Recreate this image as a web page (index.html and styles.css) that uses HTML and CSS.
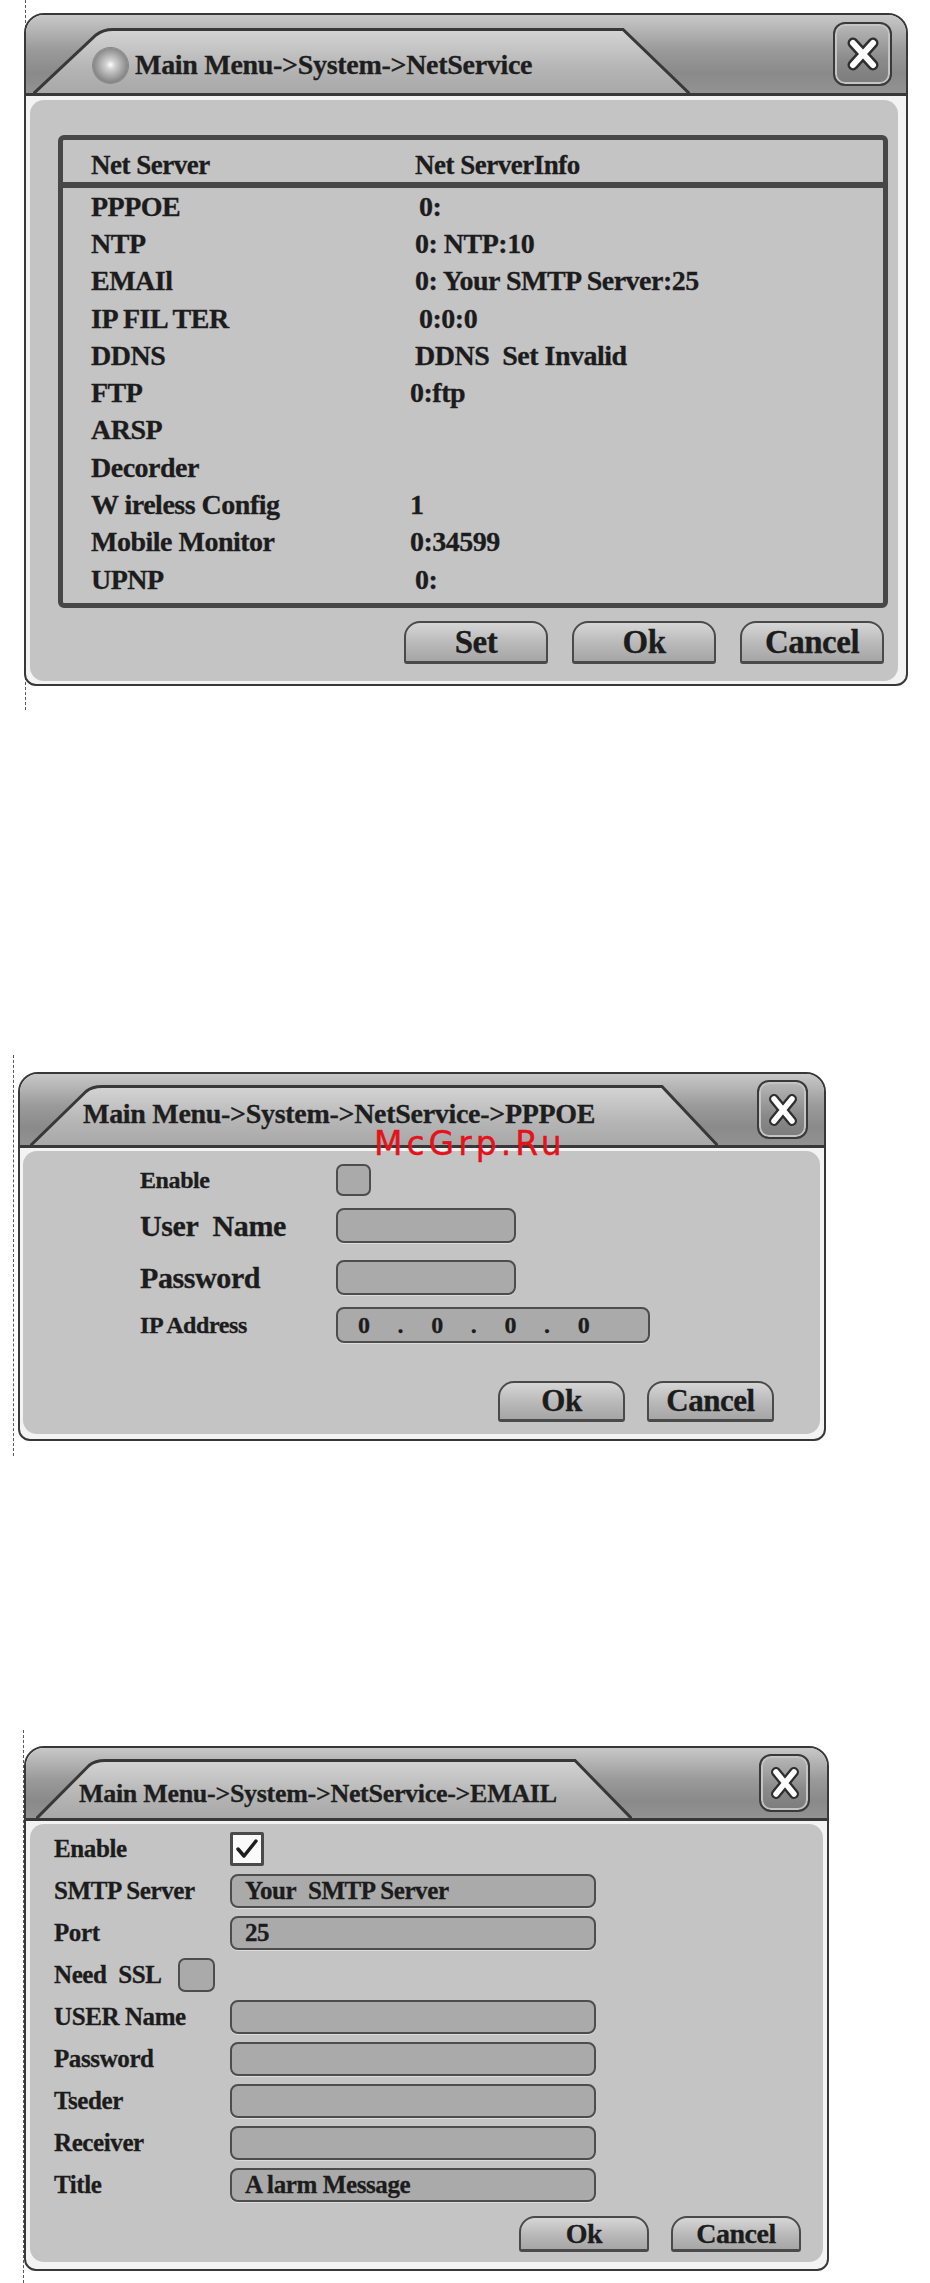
FILE: index.html
```html
<!DOCTYPE html>
<html lang="en">
<head>
    <meta charset="UTF-8">
    <title>NetService</title>
    <link rel="stylesheet" href="styles.css">
</head>
<body>
    <!-- NetService list -->
    <div class="figure fig-net">
        <div class="dialog dialog-net">
            <div class="titlebar">
                <div class="tab">
                    <svg class="tab-shape" width="657" height="65" viewBox="0 0 657 65">
                        <defs>
                            <linearGradient id="tabFill1" x1="0" y1="0" x2="0" y2="1">
                                <stop offset="0" stop-color="#d4d4d4"/>
                                <stop offset="0.6" stop-color="#b4b4b4"/>
                                <stop offset="1" stop-color="#a7a7a7"/>
                            </linearGradient>
                        </defs>
                        <path d="M-2,68 L63,7 Q70,1.5 80,1.5 L590,1.5 L659,68 Z" fill="url(#tabFill1)" stroke="#383838" stroke-width="3"/>
                    </svg>
                    <span class="sphere"></span>
                    <span class="tab-title">Main Menu-&gt;System-&gt;NetService</span>
                </div>
                <div class="close">
                    <svg width="34" height="36" viewBox="0 0 34 36">
                        <path d="M7,7 L27,29 M27,7 L7,29" stroke="#2e2e2e" stroke-width="11" stroke-linecap="round"/>
                        <path d="M7,7 L27,29 M27,7 L7,29" stroke="#fff" stroke-width="6" stroke-linecap="round"/>
                    </svg>
                </div>
            </div>
            <div class="panel">
                <div class="server-table">
                    <div class="server-head"><span>Net Server</span><span>Net ServerInfo</span></div>
                    <div class="server-row"><span>PPPOE</span><span class="nudge">0:</span></div>
                    <div class="server-row"><span>NTP</span><span>0: NTP:10</span></div>
                    <div class="server-row"><span>EMAIl</span><span>0: Your SMTP Server:25</span></div>
                    <div class="server-row"><span>IP FIL TER</span><span class="nudge">0:0:0</span></div>
                    <div class="server-row"><span>DDNS</span><span>DDNS&nbsp; Set Invalid</span></div>
                    <div class="server-row"><span>FTP</span><span class="pull">0:ftp</span></div>
                    <div class="server-row"><span>ARSP</span><span></span></div>
                    <div class="server-row"><span>Decorder</span><span></span></div>
                    <div class="server-row"><span>W ireless Config</span><span class="pull">1</span></div>
                    <div class="server-row"><span>Mobile Monitor</span><span class="pull">0:34599</span></div>
                    <div class="server-row"><span>UPNP</span><span>0:</span></div>
                </div>
                <div class="actions actions-net">
                    <div class="btn">Set</div>
                    <div class="btn">Ok</div>
                    <div class="btn">Cancel</div>
                </div>
            </div>
        </div>
    </div>

    <!-- PPPOE -->
    <div class="figure fig-pppoe">
        <div class="dialog dialog-pppoe">
            <div class="titlebar">
                <div class="tab">
                    <svg class="tab-shape" width="688" height="60" viewBox="0 0 688 60">
                        <defs>
                            <linearGradient id="tabFill2" x1="0" y1="0" x2="0" y2="1">
                                <stop offset="0" stop-color="#d4d4d4"/>
                                <stop offset="0.6" stop-color="#b4b4b4"/>
                                <stop offset="1" stop-color="#a7a7a7"/>
                            </linearGradient>
                        </defs>
                        <path d="M-2,63 L56,6.5 Q62,1.5 72,1.5 L632,1.5 L690,63 Z" fill="url(#tabFill2)" stroke="#383838" stroke-width="3"/>
                    </svg>
                    <span class="tab-title">Main Menu-&gt;System-&gt;NetService-&gt;PPPOE</span>
                </div>
                <div class="close">
                    <svg width="30" height="34" viewBox="0 0 30 34">
                        <path d="M6,6 L24,28 M24,6 L6,28" stroke="#2e2e2e" stroke-width="10" stroke-linecap="round"/>
                        <path d="M6,6 L24,28 M24,6 L6,28" stroke="#fff" stroke-width="5.5" stroke-linecap="round"/>
                    </svg>
                </div>
            </div>
            <div class="panel">
                <div class="form-row">
                    <span class="label label-sm">Enable</span>
                    <span class="check"></span>
                </div>
                <div class="form-row row-user">
                    <span class="label label-lg">User&nbsp; Name</span>
                    <span class="field field-short"></span>
                </div>
                <div class="form-row row-pass">
                    <span class="label label-lg">Password</span>
                    <span class="field field-short"></span>
                </div>
                <div class="form-row row-ip">
                    <span class="label label-sm">IP Address</span>
                    <span class="field field-ip">
                        <span>0</span><span>.</span><span>0</span><span>.</span><span>0</span><span>.</span><span>0</span>
                    </span>
                </div>
                <div class="actions actions-pppoe">
                    <div class="btn">Ok</div>
                    <div class="btn">Cancel</div>
                </div>
            </div>
            <div class="watermark">McGrp.Ru</div>
        </div>
    </div>

    <!-- EMAIL -->
    <div class="figure fig-email">
        <div class="dialog dialog-email">
            <div class="titlebar">
                <div class="tab">
                    <svg class="tab-shape" width="596" height="59" viewBox="0 0 596 59">
                        <defs>
                            <linearGradient id="tabFill3" x1="0" y1="0" x2="0" y2="1">
                                <stop offset="0" stop-color="#d4d4d4"/>
                                <stop offset="0.6" stop-color="#b4b4b4"/>
                                <stop offset="1" stop-color="#a7a7a7"/>
                            </linearGradient>
                        </defs>
                        <path d="M-2,62 L53,6.5 Q59,1.5 69,1.5 L539,1.5 L598,62 Z" fill="url(#tabFill3)" stroke="#383838" stroke-width="3"/>
                    </svg>
                    <span class="tab-title">Main Menu-&gt;System-&gt;NetService-&gt;EMAIL</span>
                </div>
                <div class="close">
                    <svg width="30" height="34" viewBox="0 0 30 34">
                        <path d="M6,6 L24,28 M24,6 L6,28" stroke="#2e2e2e" stroke-width="10" stroke-linecap="round"/>
                        <path d="M6,6 L24,28 M24,6 L6,28" stroke="#fff" stroke-width="5.5" stroke-linecap="round"/>
                    </svg>
                </div>
            </div>
            <div class="panel">
                <div class="form-row">
                    <span class="label">Enable</span>
                    <span class="check check-on">
                        <svg width="24" height="22" viewBox="0 0 24 22">
                            <path d="M3,11 L9,18 L21,3" fill="none" stroke="#1e1e1e" stroke-width="3.5" stroke-linecap="round" stroke-linejoin="round"/>
                        </svg>
                    </span>
                </div>
                <div class="form-row">
                    <span class="label">SMTP Server</span>
                    <span class="field">Your&nbsp; SMTP Server</span>
                </div>
                <div class="form-row">
                    <span class="label">Port</span>
                    <span class="field">25</span>
                </div>
                <div class="form-row">
                    <span class="label-inline">Need&nbsp; SSL</span>
                    <span class="check check-ssl"></span>
                </div>
                <div class="form-row">
                    <span class="label">USER Name</span>
                    <span class="field"></span>
                </div>
                <div class="form-row">
                    <span class="label">Password</span>
                    <span class="field"></span>
                </div>
                <div class="form-row">
                    <span class="label">Tseder</span>
                    <span class="field"></span>
                </div>
                <div class="form-row">
                    <span class="label">Receiver</span>
                    <span class="field"></span>
                </div>
                <div class="form-row">
                    <span class="label">Title</span>
                    <span class="field">A larm Message</span>
                </div>
                <div class="actions actions-email">
                    <div class="btn">Ok</div>
                    <div class="btn">Cancel</div>
                </div>
            </div>
        </div>
    </div>
</body>
</html>
```

FILE: styles.css
```css
body {
    margin: 0;
    background: #fff;
    color: #1c1c1c;
    font-family: "Liberation Serif", "Times New Roman", serif;
    font-weight: bold;
    -webkit-text-stroke: 0.3px #1c1c1c;
}

/* dashed guide line on the left of each screenshot */
.figure {
    border-left: 1px dashed #5a5a5a;
    box-sizing: border-box;
}

.fig-net {
    margin-left: 25px;
    height: 710px;
    padding-top: 13px;
}

.fig-net .dialog {
    margin-left: -2px;
}

.fig-pppoe {
    margin: 345px 0 0 13px;
    height: 401px;
    padding-top: 17px;
}

.fig-pppoe .dialog {
    margin-left: 4px;
}

.fig-email {
    margin: 274px 0 0 23px;
    height: 553px;
    padding-top: 16px;
}

/* dialog frame */
.dialog {
    position: relative;
    box-sizing: border-box;
    border: 2px solid #383838;
    border-radius: 20px 20px 12px 12px;
    background: #f3f3f3;
    overflow: hidden;
}

.dialog-net {
    width: 884px;
}

.dialog-pppoe {
    width: 808px;
}

.dialog-email {
    width: 805px;
}

.titlebar {
    display: flex;
    align-items: flex-end;
    padding-left: 8px;
    border-bottom: 3px solid #383838;
    background: linear-gradient(#c8c8c8, #9a9a9a 45%, #8a8a8a 75%, #929292);
}

.dialog-net .titlebar {
    height: 78px;
    padding-left: 7px;
}

.dialog-pppoe .titlebar {
    height: 71px;
    padding-left: 10px;
}

.dialog-email .titlebar {
    height: 70px;
    padding-left: 10px;
}

.tab {
    position: relative;
    display: flex;
    align-items: center;
    box-sizing: border-box;
}

.tab-shape {
    position: absolute;
    left: 0;
    top: 0;
}

.tab-title {
    position: relative;
    font-size: 28px;
    line-height: 0.8;
    letter-spacing: -0.3px;
    color: #1e1e1e;
    white-space: nowrap;
}

.dialog-net .tab {
    width: 657px;
    height: 65px;
    padding: 9px 0 0 60px;
}

.dialog-pppoe .tab {
    width: 688px;
    height: 60px;
    padding: 0 0 2px 53px;
}

.dialog-email .tab {
    width: 596px;
    height: 59px;
    padding: 11px 0 0 43px;
}

.dialog-email .tab-title {
    font-size: 26px;
}

.sphere {
    position: relative;
    width: 35px;
    height: 35px;
    margin-right: 7px;
    border-radius: 50%;
    background: radial-gradient(circle at 50% 48%, #fff 0, #d2d2d2 18%, #9a9a9a 55%, #6c6c6c 85%, #5a5a5a 100%);
    box-shadow: 0 0 0 1px #888;
}

.close {
    display: flex;
    align-items: center;
    justify-content: center;
    align-self: center;
    margin-left: auto;
    box-sizing: border-box;
    border: 2px solid #3a3a3a;
    border-radius: 12px;
    background: linear-gradient(#b8b8b8, #8a8a8a 60%, #7c7c7c);
    box-shadow: inset 0 0 0 2px #c4c4c4;
}

.dialog-net .close {
    width: 59px;
    height: 64px;
    margin-right: 14px;
}

.dialog-pppoe .close {
    width: 51px;
    height: 59px;
    margin-right: 16px;
}

.dialog-email .close {
    width: 51px;
    height: 58px;
    margin-right: 17px;
}

/* inner grey panel */
.panel {
    box-sizing: border-box;
    border-radius: 14px;
    background: #c4c4c4;
}

.dialog-net .panel {
    margin: 4px 8px 3px 4px;
    padding: 35px 10px 17px 28px;
}

.dialog-pppoe .panel {
    margin: 3px 4px 5px 3px;
    padding: 13px 46px 12px 117px;
}

.dialog-email .panel {
    margin: 3px 4px 7px 4px;
    padding: 8px 22px 10px 24px;
    display: flex;
    flex-direction: column;
    gap: 8px;
}

/* server table */
.server-table {
    box-sizing: border-box;
    height: 473px;
    border: 5px solid #474747;
    border-radius: 6px;
}

.server-head,
.server-row {
    display: grid;
    grid-template-columns: 324px 1fr;
    align-items: center;
    padding-left: 28px;
    letter-spacing: -0.5px;
}

.server-head {
    box-sizing: border-box;
    height: 48px;
    padding-top: 8px;
    border-bottom: 6px solid #474747;
    font-size: 27px;
}

.server-row {
    height: 37.3px;
    font-size: 28px;
}

.nudge {
    margin-left: 4px;
}

.pull {
    margin-left: -5px;
}

/* buttons */
.actions {
    display: flex;
    justify-content: flex-end;
}

.btn {
    display: flex;
    align-items: center;
    justify-content: center;
    box-sizing: border-box;
    border: 2px solid #4a4a4a;
    border-bottom-width: 3px;
    border-radius: 16px 16px 3px 3px;
    background: linear-gradient(#d6d6d6, #b8b8b8 55%, #a6a6a6);
    color: #1c1c1c;
    letter-spacing: -0.5px;
}

.actions-net {
    gap: 24px;
    margin-top: 13px;
    padding-right: 4px;
}

.actions-net .btn {
    width: 144px;
    height: 43px;
    font-size: 33px;
}

.actions-pppoe {
    gap: 22px;
    margin-top: 38px;
}

.actions-pppoe .btn {
    width: 127px;
    height: 41px;
    font-size: 31px;
}

.actions-email {
    gap: 22px;
    margin-top: 6px;
}

.actions-email .btn {
    width: 130px;
    height: 36px;
    font-size: 28px;
}

/* form rows */
.form-row {
    display: flex;
    align-items: center;
}

.label {
    flex: none;
    letter-spacing: -0.4px;
    white-space: nowrap;
}

.dialog-pppoe .label {
    width: 196px;
}

.dialog-email .label,
.dialog-email .label-inline {
    font-size: 25px;
    letter-spacing: -0.4px;
}

.dialog-email .label {
    width: 176px;
}

.label-sm {
    font-size: 24px;
}

.label-lg {
    font-size: 30px;
}

.row-user {
    margin-top: 12px;
}

.row-pass {
    margin-top: 17px;
}

.row-ip {
    margin-top: 12px;
}

.field {
    display: flex;
    align-items: center;
    box-sizing: border-box;
    width: 366px;
    height: 34px;
    padding-left: 13px;
    border: 2px solid #4d4d4d;
    border-radius: 8px;
    background: #aaaaaa;
    box-shadow: 0 1px 0 #dcdcdc;
    font-size: 25px;
    letter-spacing: -0.4px;
    white-space: nowrap;
}

.field-short {
    width: 180px;
    height: 35px;
}

.field-ip {
    width: 314px;
    height: 36px;
    gap: 28px;
    padding-left: 20px;
    font-size: 24px;
}

.check {
    display: flex;
    align-items: center;
    justify-content: center;
    box-sizing: border-box;
    width: 35px;
    height: 32px;
    border: 2px solid #4d4d4d;
    border-radius: 7px;
    background: #aaaaaa;
}

.check-on {
    width: 34px;
    height: 34px;
    border: 3px solid #4a4a4a;
    border-radius: 2px;
    background: #fafafa;
}

.check-ssl {
    width: 37px;
    height: 34px;
    margin-left: 16px;
}

.watermark {
    position: absolute;
    left: 354px;
    top: 57px;
    font-family: "DejaVu Sans", sans-serif;
    font-weight: normal;
    font-size: 33px;
    line-height: 0.8;
    letter-spacing: 4px;
    color: #e4121b;
    -webkit-text-stroke: 0.4px #e4121b;
}
```
